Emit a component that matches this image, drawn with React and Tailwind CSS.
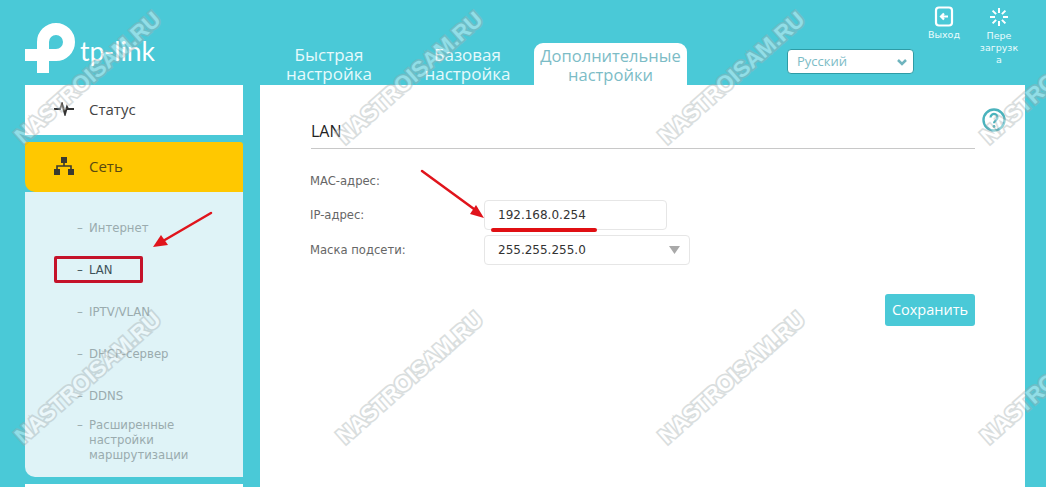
import React from "react";

const sans = "font-['Open_Sans','Noto_Sans',sans-serif]";
const dv = "font-['DejaVu_Sans',sans-serif]";

const marks = [];
for (const x of [88, 410, 732, 1054]) for (const y of [78, 378]) marks.push([x, y]);

function Watermark({ x, y }) {
  return (
    <div
      className="absolute -translate-x-1/2 -translate-y-1/2 -rotate-[41.5deg] whitespace-nowrap font-['Liberation_Sans',sans-serif] font-bold text-[22px] leading-none text-white opacity-40 [-webkit-text-stroke:3.5px_#a3adaf] [paint-order:stroke_fill] pointer-events-none"
      style={{ left: x, top: y }}
    >
      NASTROISAM.RU
    </div>
  );
}

function SubItem({ children, active, tall }) {
  return (
    <div className={`flex ${tall ? "h-[48px] pt-[1px]" : "h-[42px] items-center"} pl-[52px] text-[11.7px] leading-[15px] ${dv} ${active ? "text-[#3e5259]" : "text-[#9aabae]"}`}>
      <span className="w-[12px] shrink-0">–</span>
      <span>{children}</span>
    </div>
  );
}

export default function App() {
  return (
    <div className={`relative h-[487px] w-[1046px] overflow-hidden bg-[#4ac9d7] ${sans}`}>
      <header className="flex h-[85px] items-end">
        <div className="relative flex h-full w-[266px] shrink-0">
          <svg width="80" height="85" viewBox="0 0 80 85" className="shrink-0">
            <path d="M43 73V42a13 13 0 1 1 13 13H25" fill="none" stroke="#fff" strokeWidth="12" />
          </svg>
          <span className="mt-[33px] text-[26.5px] leading-[36px] font-['Lato',sans-serif] font-normal text-white">tp-link</span>
        </div>
        <div className="flex w-[126px] flex-col items-center pb-[2px] text-[17px] leading-[19px] text-[#e6fafc]">
          <span>Быстрая</span>
          <span>настройка</span>
        </div>
        <div className="ml-[9px] flex w-[133px] flex-col items-center pb-[2px] text-[17px] leading-[19px] text-[#e6fafc]">
          <span>Базовая</span>
          <span>настройка</span>
        </div>
        <div className="flex h-[42px] w-[153px] flex-col items-center rounded-t-[9px] bg-white pt-[3px] text-[16.5px] leading-[19px] text-[#7cbcc6]">
          <span>Дополнительные</span>
          <span>настройки</span>
        </div>
        <div className="ml-[100px] mb-[11px] flex h-[25px] w-[127px] items-center justify-between rounded-[4px] border border-[#2e9ca6] bg-white pl-[9px] pr-[5px] text-[13px] text-[#7cbcc6]">
          <span>Русский</span>
          <svg width="12" height="8" viewBox="0 0 12 8">
            <path d="M2 2l4 4 4-4" fill="none" stroke="#6fb4be" strokeWidth="2.5" />
          </svg>
        </div>
        <div className={`ml-[14px] flex h-full w-[32px] flex-col items-center pt-[6px] text-[9.5px] leading-[12px] text-[#eafcfd] ${dv}`}>
          <svg width="20" height="21" viewBox="0 0 20 21" className="shrink-0">
            <rect x="2" y="1.500" width="16" height="18" rx="3" fill="none" stroke="#fff" strokeWidth="2.200" />
            <path d="M14 10.500H7M10 7.500l-3 3 3 3" fill="none" stroke="#fff" strokeWidth="2.200" />
          </svg>
          <span className="mt-[2px]">Выход</span>
        </div>
        <div className={`ml-[16px] flex h-full w-[46px] flex-col items-center pt-[7px] text-center text-[9.5px] leading-[12px] text-[#eafcfd] ${dv}`}>
          <svg width="20" height="20" viewBox="0 0 20 20" className="shrink-0">
            <path d="M10 1v5M10 14v5M1 10h5M14 10h5M3.600 3.600l3.500 3.500M12.900 12.900l3.500 3.500M3.600 16.400l3.500-3.500M12.900 7.100l3.500-3.500" fill="none" stroke="#fff" strokeWidth="2" />
          </svg>
          <span className="mt-[3px]">Пере</span>
          <span>загрузк</span>
          <span>а</span>
        </div>
      </header>

      <div className="flex">
        <aside className="ml-[25px] w-[218px] shrink-0">
          <div className="flex h-[50px] items-center bg-white pb-[2px] pl-[29px] text-[15px] text-[#444]">
            <svg width="20" height="14" viewBox="0 0 20 14" className="mr-[15px] shrink-0">
              <path d="M0 7h6l2-5 3 10 2-7 1 2h6" fill="none" stroke="#333" strokeWidth="2" />
            </svg>
            <span>Статус</span>
          </div>
          <div className="mt-[7px] flex h-[50px] items-center rounded-tr-[3px] rounded-bl-[10px] bg-[#ffc800] pb-[2px] pl-[29px] text-[15px] text-[#5a4a10]">
            <svg width="20" height="18" viewBox="0 0 20 18" className="mr-[15px] shrink-0">
              <path d="M7 0h6v6H7zM0 12h6v6H0zM14 12h6v6h-6z" fill="#3a3a30" />
              <path d="M10 5v4M3 13V9h14v4" fill="none" stroke="#3a3a30" strokeWidth="1.600" />
            </svg>
            <span>Сеть</span>
          </div>
          <div className="h-[285px] rounded-bl-[10px] bg-[#dff3f7] pt-[15px]">
            <SubItem>Интернет</SubItem>
            <SubItem active>LAN</SubItem>
            <SubItem>IPTV/VLAN</SubItem>
            <SubItem>DHCP-сервер</SubItem>
            <SubItem>DDNS</SubItem>
            <SubItem tall>Расширенные<br />настройки<br />маршрутизации</SubItem>
          </div>
          <div className="mt-[7px] h-[20px] bg-white" />
        </aside>

        <main className="ml-[17px] h-[402px] w-[765px] bg-white pl-[51px] pr-[50px]">
          <div className="relative mt-[29px] h-[35px] border-b border-[#c8c8c8] text-[16px] leading-[34px] text-[#222]">
            LAN
            <svg width="24" height="24" viewBox="0 0 24 24" className="absolute right-[-31px] top-[-6px]">
              <circle cx="12" cy="12" r="10.500" fill="none" stroke="#4bb3bd" strokeWidth="2.400" />
              <path d="M8.500 9.500a3.500 3.500 0 1 1 5.500 2.800c-1.300.9-2 1.500-2 3" fill="none" stroke="#4bb3bd" strokeWidth="2.200" />
              <circle cx="12" cy="18.500" r="1.400" fill="#4bb3bd" />
            </svg>
          </div>
          <div className={`-ml-[1px] text-[11.6px] text-[#666] ${dv}`}>
            <div className="mt-[14px] flex h-[34px] items-center pt-[4px]">MAC-адрес:</div>
            <div className="flex h-[35px] items-center">
              <span className="w-[174px] pt-[2px]">IP-адрес:</span>
              <div className="flex h-[30px] w-[183px] items-center rounded-[4px] border border-[#e6e6e6] pl-[13px] text-[12px] text-[#333]">192.168.0.254</div>
            </div>
            <div className="flex h-[35px] items-center">
              <span className="w-[174px] pt-[2px]">Маска подсети:</span>
              <div className="flex h-[30px] w-[206px] items-center justify-between rounded-[4px] border border-[#e6e6e6] pl-[13px] pr-[9px] text-[12px] text-[#333]">
                <span>255.255.255.0</span>
                <svg width="11" height="8" viewBox="0 0 11 8"><path d="M0 0h11L5.500 8z" fill="#a9a9a9" /></svg>
              </div>
            </div>
          </div>
          <div className="mt-[27px] flex justify-end">
            <button className="h-[32px] w-[90px] rounded-[3px] bg-[#4ac9d7] text-[14.5px] text-white">Сохранить</button>
          </div>
        </main>
      </div>

      {marks.map(([x, y]) => <Watermark key={`${x}-${y}`} x={x} y={y} />)}

      <div className="absolute left-[54px] top-[256px] h-[27px] w-[89px] rounded-[2px] border-[3px] border-[#c4122a]" />
      <div className="absolute left-[491px] top-[228px] h-[4px] w-[106px] rounded-[2px] bg-[#e00f13]" />
      <svg width="1046" height="487" viewBox="0 0 1046 487" className="pointer-events-none absolute left-0 top-0">
        <path d="M211 213L163 241" stroke="#e0141c" strokeWidth="2.500" strokeLinecap="round" />
        <path d="M153 247l8-12 7 10z" fill="#e0141c" />
        <path d="M422 171L474 209" stroke="#e0141c" strokeWidth="2.500" strokeLinecap="round" />
        <path d="M484 218l-14-4 6-9z" fill="#e0141c" />
      </svg>
    </div>
  );
}
